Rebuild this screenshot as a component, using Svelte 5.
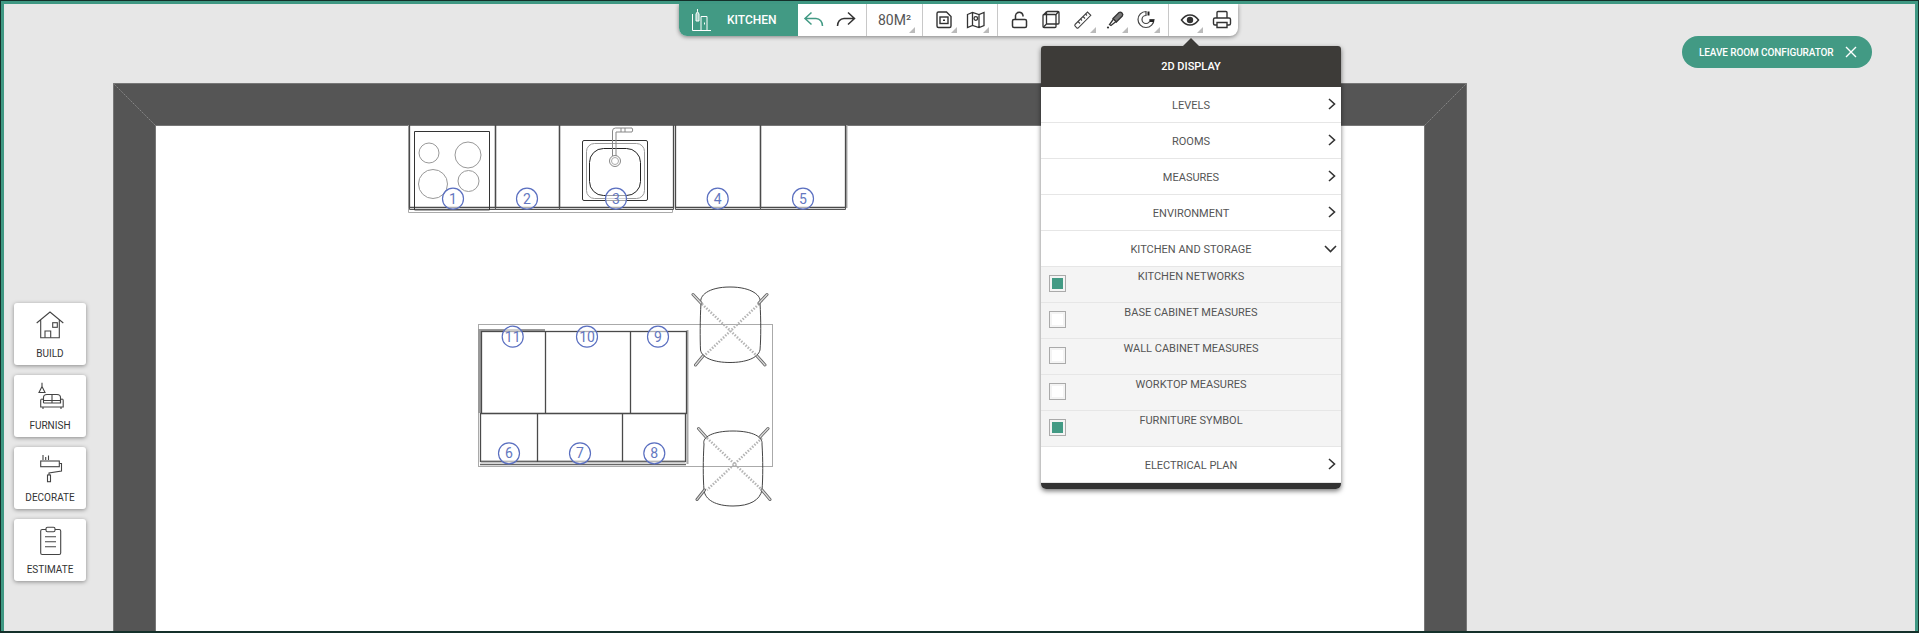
<script>
	const tools = [
		{ label: 'BUILD' },
		{ label: 'FURNISH' },
		{ label: 'DECORATE' },
		{ label: 'ESTIMATE' }
	];

	const displayTop = ['LEVELS', 'ROOMS', 'MEASURES', 'ENVIRONMENT'];

	let layers = $state([
		{ label: 'KITCHEN NETWORKS', on: true },
		{ label: 'BASE CABINET MEASURES', on: false },
		{ label: 'WALL CABINET MEASURES', on: false },
		{ label: 'WORKTOP MEASURES', on: false },
		{ label: 'FURNITURE SYMBOL', on: true }
	]);

	const badges = [
		{ n: 1, x: 453, y: 198.7 },
		{ n: 2, x: 527, y: 198.7 },
		{ n: 3, x: 616, y: 198.7 },
		{ n: 4, x: 717.7, y: 198.7 },
		{ n: 5, x: 803, y: 198.7 },
		{ n: 6, x: 509, y: 453.3 },
		{ n: 7, x: 580, y: 453.3 },
		{ n: 8, x: 654.3, y: 453.3 },
		{ n: 9, x: 658, y: 336.7 },
		{ n: 10, x: 587, y: 336.7 },
		{ n: 11, x: 512.7, y: 336.7 }
	];

	const burners = [
		{ x: 429, y: 153, r: 10 },
		{ x: 468, y: 155, r: 13 },
		{ x: 433, y: 184, r: 14.5 },
		{ x: 468.5, y: 181, r: 10.5 }
	];

	const baseUnits = [
		[409.5, 495.5],
		[495.5, 559.5],
		[559.5, 673.5],
		[675.5, 760.5],
		[760.5, 845.5]
	];

	const islandVerticals = [
		[545, 331, 413],
		[630, 331, 413],
		[537, 413, 462],
		[622, 413, 462]
	];

	const chairLegs = 'M693 294.5L701 303M767 294.5L759 303M695.5 365L703 356M765 365L757 356M698.5 428.5L706 437M768 428.5L760 437M697 499.5L704.5 490M770 499.5L762 490';
</script>

<div class="page">
	<svg class="plan" width="1919" height="633" viewBox="0 0 1919 633" fill="none">
		<!-- walls -->
		<rect x="113.5" y="83.5" width="1353" height="580" fill="#555" stroke="#777" />
		<rect x="155.5" y="125.5" width="1269" height="540" fill="#fff" stroke="#777" />
		<path d="M113.5 83.5L155.5 125.5M1466.5 83.5L1424.5 125.5" stroke="#888" stroke-dasharray="1.5 1" />

		<!-- wall run -->
		<path d="M408.5 125V212.5H672.5V210" stroke="#aaa" />
		<path d="M846.5 125V208" stroke="#aaa" stroke-width="2" />
		{#each baseUnits as [a, b]}
			<path d="M{a} 125V207.5H{b}V125" stroke="#4a4a4a" stroke-width="1.3" />
			<path d="M{a} 207.5V209.5H{b}V207.5" stroke="#555" />
		{/each}

		<!-- hob -->
		<path d="M489.5 210V131.5H414.5V210" stroke="#333" />
		<path d="M414.5 210.5H489.5" stroke="#aaa" />
		{#each burners as b}
			<circle cx={b.x} cy={b.y} r={b.r} stroke="#999" />
		{/each}

		<!-- sink -->
		<rect x="582.5" y="140.5" width="65" height="60" rx="1.5" stroke="#333" />
		<rect x="586.5" y="143.5" width="58" height="55" rx="8" stroke="#999" />
		<rect x="589.5" y="148.5" width="51" height="47" rx="14" stroke="#222" />
		<circle cx="615" cy="161" r="5.5" stroke="#888" />
		<circle cx="615" cy="161" r="3.5" stroke="#aaa" />
		<path d="M612.5 156V131q0-3 3-3H632q1.5 2 0 4H616v24" stroke="#888" />
		<path d="M621 128v4M625 128v4" stroke="#888" />

		<!-- island -->
		<rect x="478.5" y="324.5" width="294" height="142" stroke="#aaa" />
		<rect x="478" y="329" width="3" height="84" fill="#999" />
		<rect x="481" y="329" width="64" height="3" fill="#999" />
		<rect x="686.5" y="330" width="2" height="134" fill="#aaa" />
		<rect x="481.5" y="331.5" width="205" height="82" stroke="#4a4a4a" stroke-width="1.3" />
		<rect x="480.5" y="413.5" width="205" height="48" stroke="#4a4a4a" stroke-width="1.3" />
		<path d="M480 464.5H686M481 461.5H685" stroke="#666" stroke-width="1.5" />
		{#each islandVerticals as [x, a, b]}
			<path d="M{x}.5 {a}V{b}" stroke="#4a4a4a" stroke-width="1.3" />
		{/each}

		<!-- chairs -->
		<g stroke="#b4b4b4" stroke-width="2.5" stroke-dasharray="1.5 1.5">
			<path d="M702 304L757 356M759 304L704 356" />
			<path d="M707 438L762 490M762 438L707 490" />
		</g>
		<g stroke="#444">
			<path d="M701 303C699 296 708 287 730 287C752 287 762 296 760 303C761 320 761 338 760 350C758 358 746 362.5 730 362.5C714 362.5 702 358 700.5 350C700 338 700 320 701 303Z" />
			<path d="M704 444C702 437 713 431 733 431C753 431 763 437 762 444C763 460 763 478 762 490C760 500 750 506 733 506C716 506 705 500 704 490C703 478 703 460 704 444Z" />
		</g>
		<path d={chairLegs} stroke="#666" stroke-width="3" stroke-linecap="round" />
		<path d={chairLegs} stroke="#ddd" stroke-width="1.2" stroke-linecap="round" />

		{#each badges as b}
			<circle cx={b.x} cy={b.y} r="10.5" fill="#fff" fill-opacity=".55" stroke="#5a6fc0" stroke-width="1.2" />
			<text x={b.x} y={b.y + 5} class="badge-num" text-anchor="middle">{b.n}</text>
		{/each}
	</svg>

	<div class="toolbar">
		<div class="room">
			<svg width="22" height="24" viewBox="0 0 22 24" fill="none" stroke="#fff">
				<path d="M2.5 6V22.5H21M11 22V8.5H17V22M14.5 14.5V16.5" />
				<path d="M7.5 1V3.5L6 6V13H9V6L7.5 3.5" fill="#fff" fill-opacity=".5" />
			</svg>
			<span>KITCHEN</span>
		</div>
		<div class="group first">
			<button class="tool" aria-label="Undo">
				<svg viewBox="0 0 32 32" fill="none" stroke="#429a84" stroke-width="1.5"><path d="M13.5 8.5L7 14.5L13.5 20.5M7 14.5H18C22 14.5 24.5 18 24.5 22" /></svg>
			</button>
			<button class="tool" aria-label="Redo">
				<svg viewBox="0 0 32 32" fill="none" stroke="#333" stroke-width="1.5"><path d="M18 8.5L24.5 14.5L18 20.5M24.5 14.5H14C10 14.5 7.5 18 7.5 22" /></svg>
			</button>
		</div>
		<div class="group area">80M²<i class="tri"></i></div>
		<div class="group">
			<button class="tool" aria-label="Plan">
				<svg viewBox="0 0 32 32" fill="none" stroke="#333" stroke-width="1.4"><path d="M9 9.5Q9 8 10.5 8H18.5L23 12.5V22Q23 23.5 21.5 23.5H10.5Q9 23.5 9 22Z" /><rect x="12" y="13" width="8" height="6.5" /><rect x="15" y="15.5" width="2" height="1.5" fill="#333" stroke="none" /></svg>
				<i class="tri"></i>
			</button>
			<button class="tool" aria-label="Map">
				<svg viewBox="0 0 32 32" fill="none" stroke="#333" stroke-width="1.3"><path d="M7.5 10.5L12.5 8.5L19 10.5L24 8.5V21.5L19 23.5L12.5 21.5L7.5 23.5ZM12.5 8.5V21.5M19 10.5V23.5" /><circle cx="15.8" cy="14.5" r="1.8" /></svg>
				<i class="tri"></i>
			</button>
		</div>
		<div class="group">
			<button class="tool" aria-label="Lock">
				<svg viewBox="0 0 32 32" fill="none" stroke="#333" stroke-width="1.5"><rect x="9.5" y="15.5" width="14" height="8" rx="1.5" /><path d="M12.5 15.5V11.5A3.8 3.8 0 0 1 20 11.5V12.5" /></svg>
			</button>
			<button class="tool" aria-label="Cube">
				<svg viewBox="0 0 32 32" fill="none" stroke="#333" stroke-width="1.3"><path d="M8 11.5Q8 10.5 9 10.5H20Q21 10.5 21 11.5V22.5Q21 23.5 20 23.5H9Q8 23.5 8 22.5Z" /><path d="M11.5 10.5V8.5Q11.5 7.5 12.5 7.5H23Q24 7.5 24 8.5V19Q24 20 23 20H21M8.5 11L11.5 7.8M20.5 11L23.5 7.8M8.5 23L11.5 20V10.5M11.5 20H21" /></svg>
			</button>
			<button class="tool" aria-label="Measure">
				<svg viewBox="0 0 32 32" fill="none" stroke="#444" stroke-width="1.1"><path d="M8 20.5L20.5 8L23.8 11.3L11.3 23.8Q10.5 24.5 9.7 23.8L8 22Q7.4 21.2 8 20.5Z" /><path d="M18.5 10L20 11.5M16 12.5L18 14.5M13.5 15L15 16.5M11 17.5L13 19.5" /></svg>
				<i class="tri"></i>
			</button>
			<button class="tool" aria-label="Pipette">
				<svg viewBox="0 0 32 32" fill="none" stroke="#333" stroke-width="1.3"><path d="M14 14.5L20 8.5Q21.5 7.5 23 9Q24.5 10.5 23.3 12L17.3 18L14 14.5Z" fill="#777" /><path d="M14.5 15L10.5 20.5L12 21.5L17 17.5" /><circle cx="9" cy="23.5" r="1.1" fill="#333" stroke="none" /></svg>
				<i class="tri"></i>
			</button>
			<button class="tool" aria-label="Magnet">
				<svg viewBox="0 0 32 32" fill="none" stroke="#444" stroke-width="1.2"><path d="M15 7.5A8 8 0 1 0 23 15.5H19A4 4 0 1 1 15 11.5Z" /><path d="M17.5 7.5V11.5M19 17H23" stroke="#222" stroke-width="2" /></svg>
				<i class="tri"></i>
			</button>
		</div>
		<div class="group last">
			<button class="tool" aria-label="Display">
				<svg viewBox="0 0 32 32" fill="none" stroke="#333" stroke-width="1.5"><path d="M7.5 16C10 12.5 13 11 16 11C19 11 22 12.5 24.5 16C22 19.5 19 21 16 21C13 21 10 19.5 7.5 16Z" /><circle cx="16" cy="16" r="3.2" fill="#333" stroke="none" /></svg>
				<i class="tri"></i>
			</button>
			<button class="tool" aria-label="Print">
				<svg viewBox="0 0 32 32" fill="none" stroke="#333" stroke-width="1.4"><path d="M11 14V8.5Q11 7.5 12 7.5H20Q21 7.5 21 8.5V14" /><path d="M11 21H9Q7.5 21 7.5 19.5V15.5Q7.5 14 9 14H23Q24.5 14 24.5 15.5V19.5Q24.5 21 23 21H21" /><path d="M11 18.5H21V23.5H11Z" /></svg>
			</button>
		</div>
	</div>

	<div class="sidebar">
		{#each tools as tool, i}
			<div class="card">
				<svg width="32" height="32" viewBox="0 0 32 32" fill="none" stroke="#444" stroke-width="1.1">
					{#if i === 0}
						<path d="M2.7 15L16 4L29.3 15M6.7 12V29.7H25.3V12" />
						<path d="M11 29.7V23H16.7V29.7" />
						<rect x="18.7" y="14.7" width="4.6" height="4.6" />
					{:else if i === 1}
						<path d="M8 2.7V6.5M8 6.5L5 12.5H11Z" />
						<path d="M9.5 20V17.5Q9.5 14.5 13 14.5H23Q26.5 14.5 26.5 17.5V20M18 14.5V23M9.5 20.5H26.5V23" />
						<path d="M9.5 23V20Q9.5 19 8 19Q6.7 19 6.7 20.5V27H29.2V20.5Q29.2 19 28 19Q26.5 19 26.5 20V23H9.5M9 27V29M27 27V29" />
					{:else if i === 2}
						<path d="M9 3V8M11.7 5V8M14.5 3.5V8" />
						<rect x="6.7" y="9" width="18.6" height="5.7" />
						<path d="M25.3 11.5H27.5V19L15 21V23" />
						<rect x="13.5" y="23" width="3" height="6.7" />
					{:else}
						<rect x="6.7" y="5.5" width="20" height="25" rx="1.5" />
						<rect x="12" y="3.3" width="9" height="4.4" rx="1.5" fill="#fff" />
						<path d="M11 12.7H22M11 17.7H22M11 22.7H22" />
					{/if}
				</svg>
				<span>{tool.label}</span>
			</div>
		{/each}
	</div>

	<div class="panel">
		<div class="caret"></div>
		<div class="panel-head">2D DISPLAY</div>
		{#each displayTop as label}
			<div class="row">
				<span>{label}</span>
				<svg class="chev" width="8" height="12" viewBox="0 0 8 12" fill="none" stroke="#333" stroke-width="1.6"><path d="M1 1L6.5 6L1 11" /></svg>
			</div>
		{/each}
		<div class="row">
			<span>KITCHEN AND STORAGE</span>
			<svg class="chev down" width="13" height="8" viewBox="0 0 13 8" fill="none" stroke="#333" stroke-width="1.6"><path d="M1 1L6.5 6.5L12 1" /></svg>
		</div>
		{#each layers as layer, i}
			<div class="row sub">
				<button class="check" class:on={layer.on} aria-label={layer.label} onclick={() => (layers[i].on = !layers[i].on)}></button>
				<span>{layer.label}</span>
			</div>
		{/each}
		<div class="row">
			<span>ELECTRICAL PLAN</span>
			<svg class="chev" width="8" height="12" viewBox="0 0 8 12" fill="none" stroke="#333" stroke-width="1.6"><path d="M1 1L6.5 6L1 11" /></svg>
		</div>
		<div class="panel-foot"></div>
	</div>

	<div class="leave">
		<span>LEAVE ROOM CONFIGURATOR</span>
		<svg width="12" height="12" viewBox="0 0 12 12" fill="none" stroke="#fff" stroke-width="1.4"><path d="M1 1L11 11M11 1L1 11" /></svg>
	</div>

	<div class="frame"></div>
</div>

<style>
	:global(body) {
		margin: 0;
	}

	.page {
		position: relative;
		width: 1919px;
		height: 633px;
		overflow: hidden;
		background: #e7e7e7;
		font-family: Roboto, sans-serif;
		color: #4a4a4a;
	}

	.plan {
		position: absolute;
		left: 0;
		top: 0;
	}

	.badge-num {
		font-family: Roboto, sans-serif;
		font-size: 14px;
		font-weight: 400;
		fill: #6478c0;
	}

	.frame {
		position: absolute;
		inset: 0;
		box-sizing: border-box;
		border: 1px solid #14302a;
		border-bottom-width: 2px;
		pointer-events: none;
	}

	.frame::after {
		content: '';
		position: absolute;
		inset: 0;
		border: 3px solid #3f9883;
		border-bottom: 0;
	}

	.toolbar {
		position: absolute;
		left: 679px;
		top: 4px;
		height: 32px;
		width: 559px;
		display: flex;
		background: #fff;
		border-radius: 0 0 8px 8px;
		box-shadow: 0 1px 4px rgba(0, 0, 0, 0.45);
	}

	.room {
		flex: none;
		width: 119px;
		display: flex;
		align-items: center;
		gap: 15px;
		padding-left: 11px;
		box-sizing: border-box;
		background: #429a84;
		border-radius: 0 0 0 8px;
		color: #fff;
		font-size: 12px;
		font-weight: 500;
	}

	.group {
		flex: none;
		display: flex;
		align-items: center;
		box-sizing: border-box;
		padding: 0 5px;
		border-right: 1px solid #c8c8c8;
	}

	.group.first {
		padding-left: 0;
		width: 69px;
	}

	.group.last {
		border-right: 0;
		padding-right: 0;
	}

	.group.area {
		position: relative;
		width: 56px;
		padding: 0 0 0 11px;
		font-size: 14px;
		color: #555;
	}

	.tool {
		position: relative;
		width: 32px;
		height: 32px;
		padding: 0;
		border: 0;
		background: none;
		display: block;
	}

	.tool svg {
		display: block;
		width: 32px;
		height: 32px;
	}

	.tri {
		position: absolute;
		right: 3px;
		bottom: 3px;
		width: 6px;
		height: 6px;
		background: #bbb;
		clip-path: polygon(100% 0, 100% 100%, 0 100%);
	}

	.group.area .tri {
		right: 7px;
	}

	.sidebar {
		position: absolute;
		left: 14px;
		top: 303px;
		display: flex;
		flex-direction: column;
		gap: 10px;
	}

	.card {
		width: 72px;
		height: 62px;
		box-sizing: border-box;
		padding-top: 5px;
		display: flex;
		flex-direction: column;
		align-items: center;
		background: #fff;
		border-radius: 3px;
		box-shadow: 0 1px 4px rgba(0, 0, 0, 0.4);
		font-size: 10px;
		color: #333;
	}

	.card span {
		margin-top: 8px;
		line-height: 12px;
	}

	.panel {
		position: absolute;
		left: 1041px;
		top: 46px;
		width: 300px;
		background: #fff;
		border-radius: 3px 3px 5px 5px;
		box-shadow: 0 2px 5px rgba(0, 0, 0, 0.55);
	}

	.caret {
		position: absolute;
		left: 142px;
		top: -8px;
		width: 16px;
		height: 8px;
		background: #3d3b38;
		clip-path: polygon(50% 0, 100% 100%, 0 100%);
	}

	.panel-head {
		height: 41px;
		display: flex;
		align-items: center;
		justify-content: center;
		background: #3d3b38;
		border-radius: 3px 3px 0 0;
		color: #fff;
		font-size: 11px;
		font-weight: 500;
	}

	.row {
		position: relative;
		height: 36px;
		box-sizing: border-box;
		padding-top: 1px;
		display: flex;
		align-items: center;
		justify-content: center;
		border-bottom: 1px solid #e6e6e6;
		font-size: 11px;
		color: #555;
	}

	.chev {
		position: absolute;
		right: 5px;
		top: 11px;
	}

	.chev.down {
		right: 4px;
		top: 14px;
	}

	.row.sub {
		align-items: flex-start;
		padding-top: 3px;
		background: #f4f4f4;
	}

	.check {
		position: absolute;
		left: 8px;
		top: 8px;
		width: 17px;
		height: 17px;
		box-sizing: border-box;
		padding: 2px;
		border: 1px solid #aaa;
		background: #fff content-box;
	}

	.check.on {
		background: #429a84 content-box;
	}

	.panel-foot {
		height: 6px;
		background: #333;
		border-radius: 0 0 5px 5px;
	}

	.leave {
		position: absolute;
		left: 1682px;
		top: 36px;
		width: 190px;
		height: 32px;
		box-sizing: border-box;
		padding-left: 17px;
		display: flex;
		align-items: center;
		gap: 11px;
		background: #429a84;
		border-radius: 16px;
		color: #fff;
		font-size: 10px;
		font-weight: 500;
		letter-spacing: -0.1px;
	}
</style>
